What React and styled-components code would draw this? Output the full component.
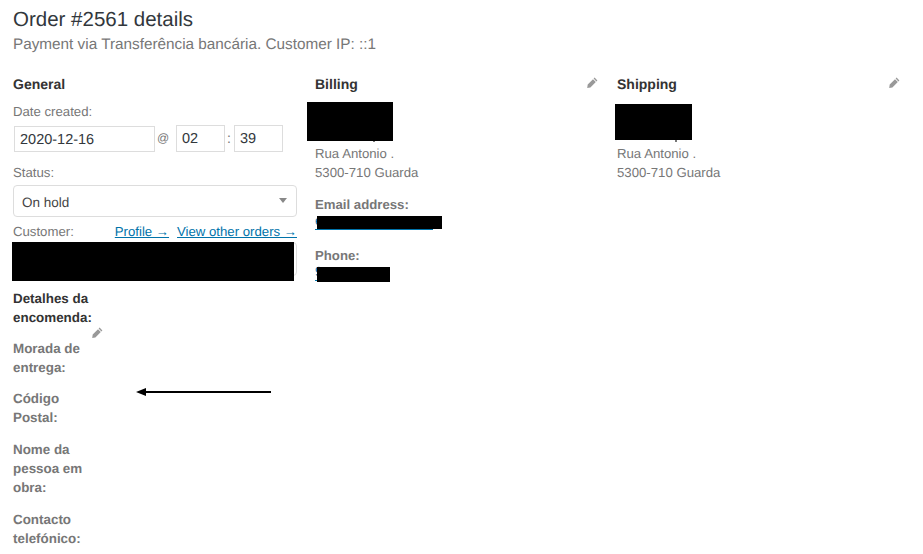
import styled, { createGlobalStyle } from 'styled-components';

const GlobalStyle = createGlobalStyle`
  html, body {
    margin: 0;
    padding: 0;
    background: #fff;
  }
  body {
    font-family: "Liberation Sans", Arial, sans-serif;
    font-size: 13.2px;
    line-height: 19px;
    color: #777;
    text-rendering: geometricPrecision;
  }
`;

const Page = styled.div`
  width: 923px;
  height: 554px;
  overflow: hidden;
  padding: 10px 0 0 13px;
  box-sizing: border-box;
  position: relative;
`;

const Title = styled.h2`
  margin: 0;
  font-size: 20.5px;
  line-height: 20px;
  font-weight: 400;
  color: #32373c;
`;

const Subtitle = styled.p`
  margin: 5px 0 0;
  font-size: 15.3px;
  line-height: 19px;
  color: #777;
`;

const Columns = styled.div`
  display: grid;
  grid-template-columns: repeat(3, 284px);
  column-gap: 18px;
  margin-top: 21px;
`;

const Column = styled.div`
  position: relative;
`;

const Heading = styled.h3`
  margin: 0 0 8px;
  font-size: 14px;
  line-height: 19px;
  font-weight: 700;
  color: #333;
`;

const Label = styled.div`
  line-height: 19px;
`;

const DateRow = styled.div`
  display: flex;
  align-items: center;
  margin: 4px 0 11px;
  height: 27px;
`;

const Field = styled.div`
  box-sizing: border-box;
  width: ${p => p.$width}px;
  height: ${p => p.$height}px;
  margin-left: ${p => p.$left || 0}px;
  border: 1px solid #ddd;
  padding: 1px 5px 0;
  font-size: 14.5px;
  line-height: ${p => p.$height - 2}px;
  color: #32373c;
`;

const Separator = styled.span`
  box-sizing: border-box;
  width: ${p => p.$width}px;
  padding-left: ${p => p.$pad}px;
  font-size: ${p => p.$size}px;
  color: #777;
`;

const Select = styled.div`
  box-sizing: border-box;
  display: flex;
  align-items: center;
  justify-content: space-between;
  height: 32px;
  margin: 3px 0 5px;
  padding: 2px 9px 0 8px;
  border: 1px solid #ddd;
  border-radius: 4px;
  font-size: 13.5px;
  color: #444;
`;

const Caret = styled.span`
  width: 0;
  height: 0;
  border-left: 4px solid transparent;
  border-right: 4px solid transparent;
  border-top: 5px solid #888;
  margin-top: -4px;
`;

const CustomerRow = styled.div`
  display: flex;
  justify-content: space-between;
`;

const Links = styled.div`
  display: flex;
  gap: 8px;
`;

const Link = styled.a`
  color: #0073aa;
  text-decoration: underline;
`;

const RedactedLink = styled.a`
  display: block;
  box-sizing: border-box;
  width: ${p => p.$width}px;
  height: 16px;
  line-height: 14px;
  color: #0073aa;
  border-bottom: 1px solid #0073aa;
`;

const CustomerBox = styled.div`
  box-sizing: border-box;
  height: 34px;
  margin-top: 1px;
  border: 1px solid #ddd;
  border-radius: 4px;
`;

const Details = styled.div`
  width: 84px;
  margin-top: 13px;
  font-size: 13.4px;
  font-weight: 700;
`;

const DetailsTitle = styled.div`
  color: #333;
`;

const DetailBlock = styled.div`
  color: #777;
  margin-top: ${p => p.$top}px;
`;

const Address = styled.div`
  margin-top: 50px;
`;

const Strong = styled.div`
  font-weight: 700;
  margin-top: ${p => p.$top}px;
`;

const Blot = styled.div`
  position: absolute;
  left: ${p => p.$x}px;
  top: ${p => p.$y}px;
  width: ${p => p.$w}px;
  height: ${p => p.$h}px;
  background: #000;
`;

// bit of the hidden line that pokes out under a blot
const Remnant = styled(Blot)`
  background: #777;
`;

const EditIcon = styled.svg`
  position: absolute;
  left: ${p => p.$x}px;
  top: ${p => p.$y}px;
  width: 11px;
  height: 11px;
  fill: #999;
`;

const Arrow = styled.svg`
  position: absolute;
  left: 135px;
  top: 386px;
`;

const Pencil = ({ x, y }) => (
  <EditIcon $x={x} $y={y} viewBox="0 0 11 11">
    <path d="M7.6.6 10.4 3.4 9.4 4.4 6.6 1.6ZM6 2.2 8.8 5 3.4 10.4.2 10.9.7 7.6Z" />
  </EditIcon>
);

export default function App() {
  return (
    <Page>
      <GlobalStyle />
      <Title>Order #2561 details</Title>
      <Subtitle>Payment via Transferência bancária. Customer IP: ::1</Subtitle>
      <Columns>
        <Column>
          <Heading>General</Heading>
          <Label>Date created:</Label>
          <DateRow>
            <Field $width={141} $height={26} $left={1}>2020-12-16</Field>
            <Separator $width={21} $pad={2} $size={12}>@</Separator>
            <Field $width={49} $height={27}>02</Field>
            <Separator $width={9} $pad={2} $size={14}>:</Separator>
            <Field $width={49} $height={27}>39</Field>
          </DateRow>
          <Label>Status:</Label>
          <Select>On hold<Caret /></Select>
          <CustomerRow>
            <Label>Customer:</Label>
            <Links>
              <Link>Profile →</Link>
              <Link>View other orders →</Link>
            </Links>
          </CustomerRow>
          <CustomerBox />
          <Details>
            <DetailsTitle>Detalhes da encomenda:</DetailsTitle>
            <DetailBlock $top={12}>Morada de entrega:</DetailBlock>
            <DetailBlock $top={12}>Código Postal:</DetailBlock>
            <DetailBlock $top={13}>Nome da pessoa em obra:</DetailBlock>
            <DetailBlock $top={13}>Contacto telefónico:</DetailBlock>
          </Details>
        </Column>
        <Column>
          <Heading>Billing</Heading>
          <Address>Rua Antonio .<br />5300-710 Guarda</Address>
          <Strong $top={13}>Email address:</Strong>
          <RedactedLink $width={118}>e</RedactedLink>
          <Strong $top={16}>Phone:</Strong>
          <RedactedLink $width={60}>9</RedactedLink>
        </Column>
        <Column>
          <Heading>Shipping</Heading>
          <Address>Rua Antonio .<br />5300-710 Guarda</Address>
        </Column>
      </Columns>

      <Pencil x={587} y={77} />
      <Pencil x={889} y={77} />
      <Pencil x={92} y={327} />

      <Blot $x={12} $y={242} $w={282} $h={39} />
      <Blot $x={307} $y={102} $w={86} $h={39} />
      <Blot $x={317} $y={216} $w={125} $h={13} />
      <Blot $x={317} $y={267} $w={73} $h={15} />
      <Blot $x={615} $y={104} $w={77} $h={36} />
      <Remnant $x={373} $y={141} $w={2} $h={1} />
      <Remnant $x={675} $y={140} $w={2} $h={2} />

      <Arrow width="138" height="12" viewBox="0 0 138 12">
        <rect x="8" y="5" width="128" height="2" fill="#000" />
        <path d="M1 6 11 2V10Z" fill="#000" />
      </Arrow>
    </Page>
  );
}
